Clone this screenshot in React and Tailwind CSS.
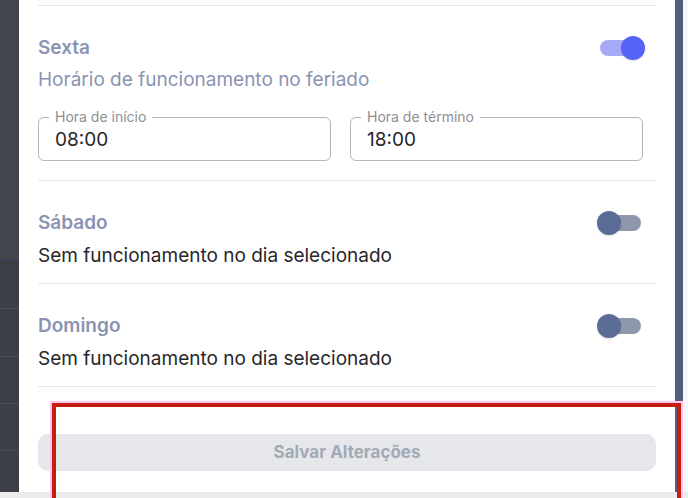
import React from "react";

const Toggle = ({ on }) => {
  return (
    <div className="relative w-[48px] h-[24px]">
      <div
        className={
          on
            ? "absolute left-[3px] right-[4px] top-[4px] h-[16px] rounded-full bg-[#a5aaf6]"
            : "absolute left-[3px] right-[4px] top-[4px] h-[16px] rounded-full bg-[#8f98ab]"
        }
      ></div>
      <div
        className={
          on
            ? "absolute top-0 right-0 w-[24px] h-[24px] rounded-full bg-[#5663f6] shadow-sm"
            : "absolute top-0 left-0 w-[24px] h-[24px] rounded-full bg-[#5a6b95] shadow-sm"
        }
      ></div>
    </div>
  );
};

const TimeField = ({ label, value }) => {
  return (
    <div className="relative h-[44px] rounded-[6px] border border-[#b5b6bd] flex items-center px-[16px] pt-[2px]">
      <span className="absolute -top-[10px] left-[10px] bg-white px-[6px] text-[14px] leading-[17px] text-[#8d8e96]">
        {label}
      </span>
      <span className="text-[19px] text-[#262628]">{value}</span>
    </div>
  );
};

const DaySection = ({ day, on, children }) => {
  return (
    <div className="border-t border-[#e6e7ea] pt-[28px]">
      <div className="flex items-center justify-between h-[28px]">
        <h3 className="text-[19px] font-semibold text-[#8a93b1]">{day}</h3>
        <div className="mr-[11px]">
          <Toggle on={on} />
        </div>
      </div>
      {children}
    </div>
  );
};

export default function App() {
  return (
    <div
      className="relative w-[688px] h-[498px] overflow-hidden bg-[#ececef] flex flex-col"
      style={{ fontFamily: "Inter, 'Noto Sans', sans-serif" }}
    >
      <div className="flex h-[492px]">
        {/* backdrop left */}
        <div className="w-[19px] flex flex-col bg-[#3c3f46]">
          <div className="h-[261px] bg-[#42454c] border-b border-[#35405a]"></div>
          <div className="h-[48px] border-b border-[#4a4d55]"></div>
          <div className="h-[48px] border-b border-[#4a4d55]"></div>
          <div className="h-[47px] border-b border-[#4a4d55]"></div>
          <div className="h-[47px] border-b border-[#4a4d55]"></div>
        </div>

        {/* panel */}
        <div className="w-[656px] bg-white px-[19px] pt-[5px] flex flex-col">
          <DaySection day="Sexta" on>
            <p className="mt-[5px] text-[19px] leading-[26px] text-[#8a93b1]">
              Horário de funcionamento no feriado
            </p>
            <div className="grid grid-cols-2 gap-[19px] mt-[24px] pr-[13px] pb-[19px]">
              <TimeField label="Hora de início" value="08:00" />
              <TimeField label="Hora de término" value="18:00" />
            </div>
          </DaySection>

          <DaySection day="Sábado" on={false}>
            <p className="mt-[6px] pb-[14px] text-[19px] leading-[26px] text-[#27272a]">
              Sem funcionamento no dia selecionado
            </p>
          </DaySection>

          <DaySection day="Domingo" on={false}>
            <p className="mt-[6px] pb-[14px] text-[19px] leading-[26px] text-[#27272a]">
              Sem funcionamento no dia selecionado
            </p>
          </DaySection>

          <div className="border-t border-[#e6e7ea] pt-[47px]">
            <button className="w-full h-[37px] rounded-[10px] bg-[#e5e7ea] text-[17px] font-bold text-[#a4a9b7]">
              Salvar Alterações
            </button>
          </div>
        </div>

        {/* backdrop right */}
        <div className="w-[8px] bg-[#545d7e]"></div>
        <div className="flex-1 bg-[#f5f7fa]"></div>
      </div>

      {/* annotation box */}
      <div className="absolute left-[52px] top-[403px] w-[629px] h-[110px] border-[4px] border-[#c5200f] shadow-[0_0_0_2px_#ffc6f2]"></div>
    </div>
  );
}
